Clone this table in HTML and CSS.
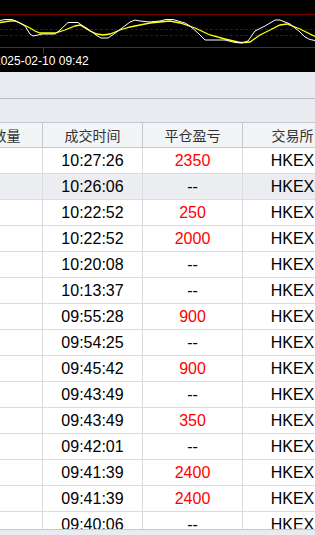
FILE: index.html
```html
<!DOCTYPE html>
<html lang="zh">
<head>
<meta charset="utf-8">
<title>成交明细</title>
<link rel="stylesheet" href="styles.css">
</head>
<body>
<div class="page">
  <div class="chart">
    <svg class="plot" width="315" height="54" viewBox="0 0 315 54">
      <line class="lim" x1="0" y1="14.5" x2="315" y2="14.5"/>
      <line class="dash" x1="0" y1="29.5" x2="315" y2="29.5"/>
      <line class="dash" x1="0" y1="35.5" x2="315" y2="35.5"/>
      <line class="axis" x1="0" y1="47.5" x2="315" y2="47.5"/>
      <line class="axis" x1="43.5" y1="47" x2="43.5" y2="54"/>
      <polyline class="yel" points="0,22.5 10,21 15,21 20,23 30,28 35,31 40,33 55,33 65,30 75,26 80,25 90,31 97,34 103,35 110,34 120,30 130,27 140,25 150,23 160,22 170,21 180,23 195,28 210,35 225,39 240,42.5 245,42.5 250,42 260,35 270,30 280,25 287,24 300,29 315,36.5"/>
      <polyline class="wht" points="0,20.5 5,19.5 12,19.5 18,22 25,26 30,34 33,36 38,35 42,34 55,34 60,30 68,22.5 78,22.5 80,24 88,29 96,35 101,38 108,38 114,34 122,28 130,22 135,20 140,21 150,22 160,21 166,19.5 173,19.5 185,23 190,26 198,33 205,40 225,40 235,42.5 242,43 248,41 255,31 265,26 275,20 280,20 290,24 300,32 305,37 310,39.5 315,40.5"/>
    </svg>
    <div class="stamp">2025-02-10 09:42</div>
  </div>
  <div class="toolbar"></div>
  <div class="subbar"></div>
  <div class="grid">
    <div class="row head">
      <div class="cell">成交数量</div><div class="cell">成交时间</div><div class="cell">平仓盈亏</div><div class="cell">交易所</div>
    </div>
    <div class="row"><div class="cell"></div><div class="cell">10:27:26</div><div class="cell pnl">2350</div><div class="cell">HKEX</div></div>
    <div class="row sel"><div class="cell"></div><div class="cell">10:26:06</div><div class="cell">--</div><div class="cell">HKEX</div></div>
    <div class="row"><div class="cell"></div><div class="cell">10:22:52</div><div class="cell pnl">250</div><div class="cell">HKEX</div></div>
    <div class="row"><div class="cell"></div><div class="cell">10:22:52</div><div class="cell pnl">2000</div><div class="cell">HKEX</div></div>
    <div class="row"><div class="cell"></div><div class="cell">10:20:08</div><div class="cell">--</div><div class="cell">HKEX</div></div>
    <div class="row"><div class="cell"></div><div class="cell">10:13:37</div><div class="cell">--</div><div class="cell">HKEX</div></div>
    <div class="row"><div class="cell"></div><div class="cell">09:55:28</div><div class="cell pnl">900</div><div class="cell">HKEX</div></div>
    <div class="row"><div class="cell"></div><div class="cell">09:54:25</div><div class="cell">--</div><div class="cell">HKEX</div></div>
    <div class="row"><div class="cell"></div><div class="cell">09:45:42</div><div class="cell pnl">900</div><div class="cell">HKEX</div></div>
    <div class="row"><div class="cell"></div><div class="cell">09:43:49</div><div class="cell">--</div><div class="cell">HKEX</div></div>
    <div class="row"><div class="cell"></div><div class="cell">09:43:49</div><div class="cell pnl">350</div><div class="cell">HKEX</div></div>
    <div class="row"><div class="cell"></div><div class="cell">09:42:01</div><div class="cell">--</div><div class="cell">HKEX</div></div>
    <div class="row"><div class="cell"></div><div class="cell">09:41:39</div><div class="cell pnl">2400</div><div class="cell">HKEX</div></div>
    <div class="row"><div class="cell"></div><div class="cell">09:41:39</div><div class="cell pnl">2400</div><div class="cell">HKEX</div></div>
    <div class="row"><div class="cell"></div><div class="cell">09:40:06</div><div class="cell">--</div><div class="cell">HKEX</div></div>
  </div>
  <div class="hscroll"></div>
</div>
</body>
</html>
```

FILE: styles.css
```css
* { box-sizing: border-box; }
html, body { margin: 0; padding: 0; }
body {
  width: 315px;
  height: 535px;
  overflow: hidden;
  background: #e8ebef;
  font-family: "Liberation Sans", "Noto Sans CJK SC", sans-serif;
}
.page {
  display: flex;
  flex-direction: column;
  width: 315px;
  height: 535px;
  overflow: hidden;
}
.chart {
  height: 72px;
  flex: none;
  background: #000;
  overflow: hidden;
}
.plot { display: block; }
.lim { stroke: #7a0000; stroke-width: 1; }
.dash { stroke: #6e0000; stroke-width: 1; stroke-dasharray: 3 2; }
.axis { stroke: #b80000; stroke-width: 1; }
.yel { fill: none; stroke: #ffff00; stroke-width: 1.3; }
.wht { fill: none; stroke: #ffffff; stroke-width: 1; }
.stamp {
  margin-left: -6px;
  font-size: 12px;
  line-height: 14px;
  color: #fff;
  white-space: nowrap;
}
.toolbar {
  flex: none;
  height: 27px;
  background: #e8ebef;
  border-bottom: 1px solid #b8bcc3;
}
.subbar {
  flex: none;
  height: 23px;
  background: #e8ebef;
}
.grid {
  flex: 1;
  min-height: 0;
  overflow: hidden;
  margin-left: -57px;
  width: 400px;
  background: #fff;
}
.row {
  display: grid;
  grid-template-columns: repeat(4, 100px);
  height: 26px;
  border-bottom: 1px solid #dcdcdc;
  background: #fff;
}
.cell {
  border-right: 1px solid #dcdcdc;
  text-align: center;
  font-size: 16px;
  line-height: 25px;
  color: #000;
  white-space: nowrap;
  overflow: hidden;
}
.pnl { color: #ff0000; }
.sel { background: #ebedf0; }
.head {
  height: 26px;
  background: #f3f4f6;
  border-top: 1px solid #c4c8ce;
  border-bottom: 1px solid #c4c8ce;
}
.head .cell {
  border-right-color: #c4c8ce;
  font-family: "Noto Sans CJK SC", sans-serif;
  font-size: 14px;
  line-height: 24px;
  color: #333;
}
.hscroll {
  flex: none;
  height: 6px;
  background: #e8ebef;
  border-top: 1px solid #c4c8ce;
}
```
